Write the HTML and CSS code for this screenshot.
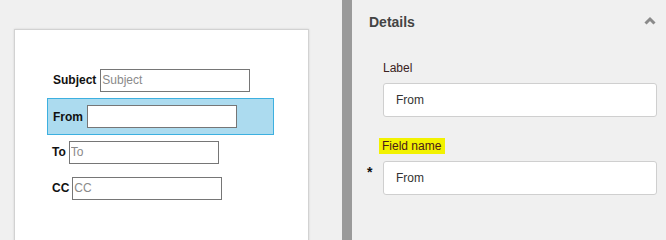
FILE: index.html
```html
<!DOCTYPE html>
<html>
<head>
<meta charset="utf-8">
<link rel="stylesheet" href="styles.css">
</head>
<body>
<div class="app">
  <div class="canvas">
    <div class="card">
      <div class="row"><label class="lbl">Subject</label><input class="fld" placeholder="Subject"></div>
      <div class="row selected"><label class="lbl">From</label><input class="fld"></div>
      <div class="row"><label class="lbl lbl-tight">To</label><input class="fld" placeholder="To"></div>
      <div class="row"><label class="lbl lbl-tight">CC</label><input class="fld" placeholder="CC"></div>
    </div>
  </div>
  <div class="divider"></div>
  <div class="panel">
    <div class="panel-head">
      <span class="panel-title">Details</span>
      <svg class="chev" width="12" height="9" viewBox="0 0 12 9"><polyline points="1.5,7.5 6,3 10.5,7.5" fill="none" stroke="#8a8a8a" stroke-width="3"/></svg>
    </div>
    <div class="group">
      <div class="g-label">Label</div>
      <div class="g-row"><input class="g-input" value="From"></div>
    </div>
    <div class="group group-2">
      <div class="g-label"><span class="hl">Field name</span></div>
      <div class="g-row req"><span class="star">*</span><input class="g-input" value="From"></div>
    </div>
  </div>
</div>
</body>
</html>
```
FILE: styles.css
```css
html, body {
  margin: 0;
  padding: 0;
  height: 100%;
  background: #f0f0f0;
  overflow: hidden;
  font-family: "Liberation Sans", Arial, sans-serif;
}
.app {
  display: flex;
  width: 666px;
  height: 100vh;
  min-height: 207px;
}
.canvas {
  width: 342px;
  flex: none;
  padding: 29px 0 0 14px;
  box-sizing: border-box;
  overflow: hidden;
}
.card {
  width: 295px;
  height: 600px;
  box-sizing: border-box;
  background: #fff;
  border: 1px solid #d2d2d2;
  box-shadow: 0 0 2px rgba(0,0,0,0.12);
  padding-top: 32px;
  padding-left: 32px;
}
.row {
  display: flex;
  align-items: center;
  gap: 4px;
  width: 227px;
  height: 36px;
  box-sizing: border-box;
  padding: 0 5px;
  border: 1px solid transparent;
}
.row.selected {
  background: #acdbef;
  border-color: #3db0e0;
  height: 37px;
  margin-bottom: -1px;
}
.lbl {
  font-size: 12px;
  font-weight: bold;
  color: #111;
}
.lbl-tight {
  margin-left: -1px;
  margin-right: -1px;
}
.fld {
  width: 150px;
  height: 23px;
  box-sizing: border-box;
  border: 1px solid #767676;
  padding: 0 1px;
  margin: 0;
  font-family: "Liberation Sans", Arial, sans-serif;
  font-size: 12px;
  background: #fff;
  outline: none;
}
.fld::placeholder {
  color: #8a8a8a;
}
.divider {
  width: 10px;
  flex: none;
  background: #9a9a9a;
}
.panel {
  flex: 1;
  padding: 12px 9px 0 17px;
  box-sizing: border-box;
}
.panel-head {
  display: flex;
  justify-content: space-between;
  align-items: center;
  height: 20px;
  padding-right: 1px;
}
.panel-title {
  font-size: 14px;
  font-weight: bold;
  color: #444;
  line-height: 20px;
}
.chev {
  display: block;
  margin-top: -3px;
}
.group {
  margin-top: 28px;
  padding-left: 14px;
}
.group-2 {
  margin-top: 21px;
}
.g-label {
  font-size: 12px;
  line-height: 16px;
  color: #3a2222;
  margin-bottom: 7px;
}
.hl {
  display: inline-block;
  background: #f2f200;
  padding: 0 4px 0 3px;
  margin-left: -4px;
  color: #4a1a1a;
}
.g-row {
  display: flex;
}
.g-row.req {
  margin-left: -16px;
}
.star {
  width: 16px;
  flex: none;
  font-size: 14px;
  font-weight: bold;
  line-height: 14px;
  padding-top: 4px;
  box-sizing: border-box;
  color: #111;
}
.g-input {
  flex: 1;
  min-width: 0;
  height: 34px;
  box-sizing: border-box;
  border: 1px solid #cfcfcf;
  border-radius: 3px;
  background: #fff;
  padding: 0 12px;
  margin: 0;
  font-family: "Liberation Sans", Arial, sans-serif;
  font-size: 12px;
  color: #333;
  outline: none;
}
```
